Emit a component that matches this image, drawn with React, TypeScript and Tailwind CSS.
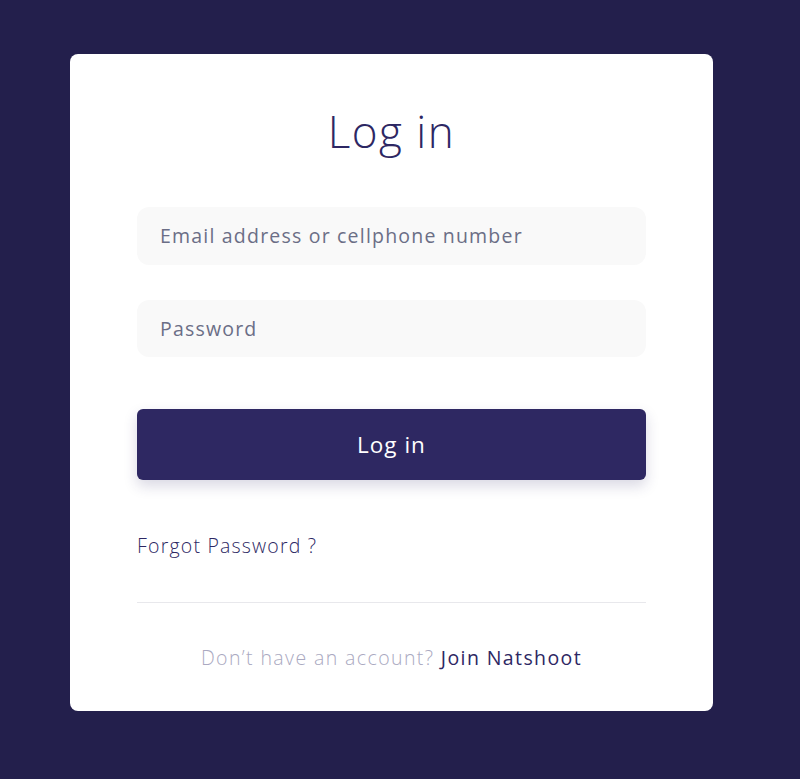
export default function App() {
  return (
    <div
      className="min-h-screen w-full bg-[#231f4c] flex justify-center pr-[17px] pt-[54px]"
      style={{ fontFamily: '"Open Sans", "Noto Sans", sans-serif' }}
    >
      <div className="w-[643px] h-[657px] bg-white rounded-[8px] px-[67px] pt-[46px] pb-[40px] flex flex-col">
        <h1 className="text-center text-[44px] leading-[63px] font-light tracking-[1.5px] text-[#2d2763]">Log in</h1>
        <div className="mt-[44px] h-[58px] rounded-[12px] bg-[#f9f9f9] flex items-center pl-[23px] text-[19.5px] tracking-[1.2px] font-medium text-[#6b6e86]">
          Email address or cellphone number
        </div>
        <div className="mt-[35px] h-[57px] rounded-[12px] bg-[#f9f9f9] flex items-center pl-[23px] text-[19.5px] tracking-[1.2px] font-medium text-[#6b6e86]">
          Password
        </div>
        <button className="mt-[52px] h-[71px] rounded-[6px] bg-[#2e2862] text-white text-[22.5px] tracking-[1px] shadow-[0_6px_14px_rgba(46,40,98,0.18)] flex items-center justify-center">
          Log in
        </button>
        <div className="mt-[52px] text-[19.5px] leading-[27px] tracking-[1.2px] font-light text-[#2d2763]">Forgot Password ?</div>
        <div className="mt-[43px] h-px bg-[#e8e8ec]" />
        <div className="mt-[41px] text-center text-[19.5px] leading-[27px] tracking-[1.4px] font-light">
          <span className="text-[#aaa9c1]">Don’t have an account? </span>
          <span className="text-[#2d2763] font-normal">Join Natshoot</span>
        </div>
      </div>
    </div>
  );
}
